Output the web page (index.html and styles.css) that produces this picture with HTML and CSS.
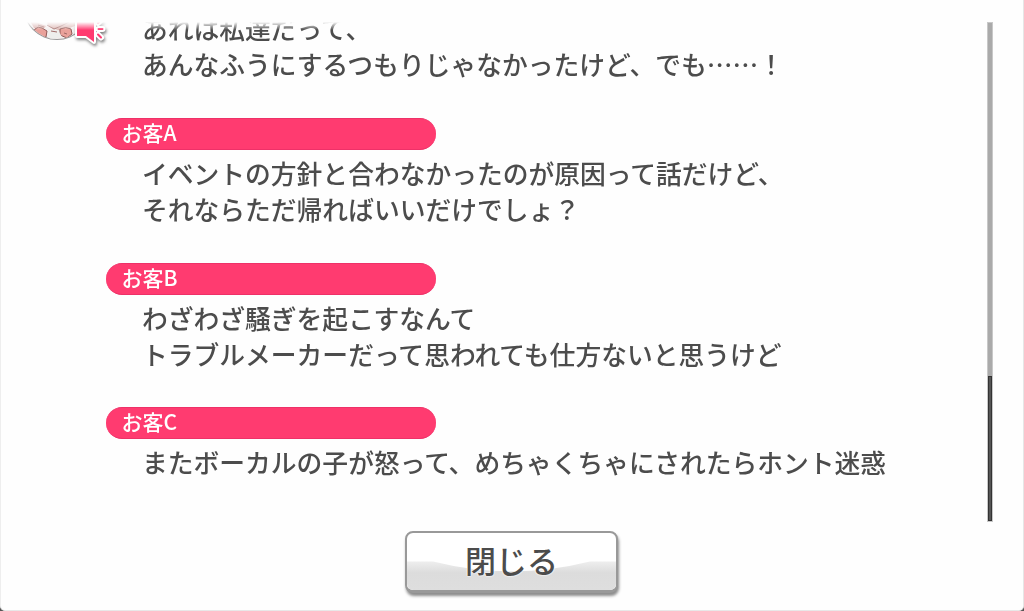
FILE: index.html
```html
<!DOCTYPE html>
<html lang="ja">
<head>
    <meta charset="UTF-8">
    <meta name="viewport" content="width=device-width, initial-scale=1.0">
    <title>ログ</title>
    <link rel="stylesheet" href="styles.css">
</head>
<body>
    <div class="dialog">
        <div class="log-area">
            <div class="log">
                <div class="entry first">
                    <svg class="avatar" viewBox="0 12 143 72">
                        <defs>
                            <clipPath id="face"><circle cx="57" cy="6" r="33"/></clipPath>
                        </defs>
                        <circle cx="57" cy="6" r="34" fill="#999"/>
                        <g clip-path="url(#face)">
                            <rect x="20" y="10" width="75" height="32" fill="#f4eeee"/>
                            <path d="M29 19l17 7-4 5-8-3z" fill="#d9aeab"/>
                            <path d="M45 17h30v9l-14 5-12-4z" fill="#dcb6b2"/>
                            <path d="M35 29q3-3 7-1l5 3-1 6-8 1-5-5z" fill="#e9a19a" stroke="#8f5a57" stroke-width="1"/>
                            <path d="M60 29q6-3 11 0l1 5-5 4-7-3z" fill="#e9a19a" stroke="#8f5a57" stroke-width="1"/>
                            <path d="M48 29l10 1 4 7-13 3z" fill="#eeeeec"/>
                            <path d="M47 25l7 4 7-3 8-4M51 31l6 1M38 25l6 2M64 33l3 1" fill="none" stroke="#a06a67" stroke-width="1"/>
                        </g>
                        <g class="speaker">
                            <path d="M77 16h11l6-4v30l-8-6h-9z" fill="#ff3b70" stroke="#fff" stroke-width="4" stroke-linejoin="round"/>
                            <path d="M98.5 29h4M98 34.5l3 3M98 23l3-3" fill="none" stroke="#fff" stroke-width="6" stroke-linecap="round"/>
                            <path d="M77 16h11l6-4v30l-8-6h-9z" fill="#ff3b70"/>
                            <path d="M98.5 29h4M98 34.5l3 3M98 23l3-3" fill="none" stroke="#ff3b70" stroke-width="2" stroke-linecap="round"/>
                        </g>
                    </svg>
                    <p class="text">あれは私達だって、<br>あんなふうにするつもりじゃなかったけど、でも……！</p>
                </div>
                <div class="entry">
                    <h2 class="name">お客A</h2>
                    <p class="text">イベントの方針と合わなかったのが原因って話だけど、<br>それならただ帰ればいいだけでしょ？</p>
                </div>
                <div class="entry">
                    <h2 class="name">お客B</h2>
                    <p class="text">わざわざ騒ぎを起こすなんて<br>トラブルメーカーだって思われても仕方ないと思うけど</p>
                </div>
                <div class="entry">
                    <h2 class="name">お客C</h2>
                    <p class="text">またボーカルの子が怒って、めちゃくちゃにされたらホント迷惑</p>
                </div>
            </div>
            <div class="scrollbar"><div class="thumb"></div></div>
        </div>
        <button type="button" class="close">
            <svg class="shine" viewBox="0 0 208 58" preserveAspectRatio="none">
                <defs>
                    <linearGradient id="shade" x1="0" y1="0" x2="0" y2="1">
                        <stop offset="0" stop-color="#eee"/>
                        <stop offset=".4" stop-color="#dcdcdc"/>
                        <stop offset="1" stop-color="#dedede"/>
                    </linearGradient>
                </defs>
                <path d="M0 29H26Q104 49 182 29H208V58H0z" fill="url(#shade)"/>
            </svg>
            <span class="label">閉じる</span>
        </button>
    </div>
</body>
</html>
```

FILE: styles.css
```css
body {
    margin: 0;
    background-color: #555;
    font-family: "Noto Sans CJK JP", sans-serif;
    color: #4c4c4c;
}
.dialog {
    box-sizing: border-box;
    height: 611px;
    padding-top: 22px;
    border-left: 1px solid #eee;
    border-right: 1px solid #e6e6e6;
    border-bottom: 1px solid #e8e8e8;
    border-radius: 0 0 5px 5px;
    background-color: #fefefe;
    overflow: hidden;
}
.log-area {
    display: flex;
    height: 500px;
}
.log {
    width: 986px;
    overflow: hidden;
    /* entries fade out at the top edge */
    -webkit-mask-image: linear-gradient(transparent, #000 8px);
    mask-image: linear-gradient(transparent, #000 8px);
}
.entry {
    height: 144.5px;
}
.entry.first {
    display: flex;
    height: 106px;
    margin-top: -10px;
}
.avatar {
    width: 143px;
    height: 72px;
    margin-left: -1px;
    flex-shrink: 0;
}
.speaker {
    filter: drop-shadow(1px 2px 1.5px rgba(0, 0, 0, 0.5));
}
.name {
    box-sizing: border-box;
    width: 330px;
    height: 32px;
    margin: 0 0 5px 104.5px;
    padding-left: 16px;
    border-radius: 16px;
    border-top: 1px solid #ee3168;
    border-bottom: 1px solid #ee3168;
    background-color: #ff3b70;
    color: #fff;
    font-size: 21px;
    font-weight: 500;
    line-height: 27px;
}
.text {
    margin: 0 0 0 141px;
    font-size: 25.77px;
    font-weight: 500;
    line-height: 36px;
    white-space: nowrap;
}
.first .text {
    margin: -2px 0 0 -1px;
}
.scrollbar {
    box-sizing: border-box;
    display: flex;
    align-items: flex-end;
    width: 6px;
    height: 500px;
    border: 1px solid #c8c8c8;
    background-color: #aaa;
}
.thumb {
    box-sizing: border-box;
    width: 4px;
    height: 145px;
    border: 1px solid #333;
    background-color: #555;
}
.close {
    display: grid;
    box-sizing: border-box;
    width: 213px;
    height: 62px;
    margin: 9px auto 0 404px;
    padding: 0;
    border: 2px solid #999;
    border-bottom-width: 3px;
    border-radius: 8px;
    background-color: #fff;
    box-shadow: 1px 3px 3px rgba(0, 0, 0, 0.45);
    font-family: inherit;
    color: #4c4c4c;
    cursor: pointer;
}
.shine,
.label {
    grid-area: 1 / 1;
}
.shine {
    width: 209px;
    height: 57px;
    border-radius: 6px;
}
.label {
    font-size: 31px;
    font-weight: 500;
    line-height: 53px;
    text-shadow: 0 0 2px #fff, 0 0 2px #fff;
}
```
